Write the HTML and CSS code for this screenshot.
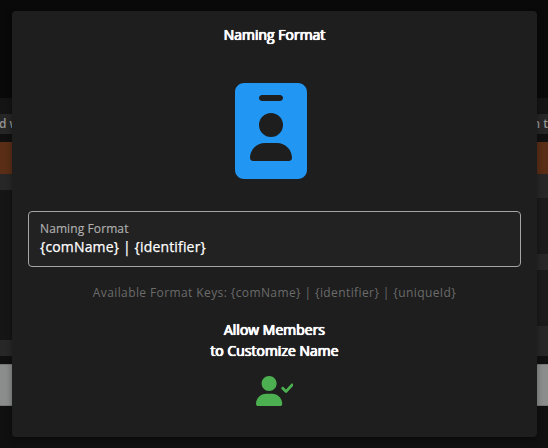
FILE: index.html
```html
<!DOCTYPE html>
<html lang="en">
<head>
<meta charset="utf-8">
<title>Naming Format</title>
<link rel="stylesheet" href="styles.css">
</head>
<body>
<div class="page" aria-hidden="true">
  <div class="side">
    <div class="top"></div><div class="gap"></div>
    <div class="label">d w</div>
    <div class="line"></div><div class="alert"></div>
    <div class="strip"></div><div class="body"></div><div class="strip"></div>
    <div class="line"></div><div class="button"></div>
  </div>
  <div class="side right">
    <div class="top"></div><div class="gap"></div>
    <div class="label">n t</div>
    <div class="line"></div><div class="alert"></div>
    <div class="strip tall"></div><div class="row"></div><div class="strip"></div><div class="row"></div><div class="strip last"></div>
    <div class="line"></div><div class="button"></div>
  </div>
</div>
<main class="dialog">
  <h1 class="title">Naming Format</h1>
  <svg class="badge" viewBox="0 0 384 512"><path fill-rule="evenodd" d="M48 0H336C362.500 0 384 21.500 384 48V464C384 490.500 362.500 512 336 512H48C21.500 512 0 490.500 0 464V48C0 21.500 21.500 0 48 0zM160 320C115.800 320 80 355.800 80 400C80 408.800 87.200 416 96 416H288C296.800 416 304 408.800 304 400C304 355.800 268.200 320 224 320zM128 224a64 64 0 1 0 128 0a64 64 0 1 0 -128 0zM144 64C135.200 64 128 71.200 128 80S135.200 96 144 96H240C248.800 96 256 88.800 256 80S248.800 64 240 64z"/></svg>
  <div class="field">
    <div class="field-label">Naming Format</div>
    <div class="field-value">{comName} | {identifier}</div>
  </div>
  <p class="hint">Available Format Keys: {comName} | {identifier} | {uniqueId}</p>
  <h2 class="title members">Allow Members<br>to Customize Name</h2>
  <svg class="check" viewBox="0 0 640 512"><path d="M274.700 304H173.300C77.610 304 0 381.600 0 477.300C0 496.500 15.520 512 34.660 512h378.700C432.500 512 448 496.500 448 477.300C448 381.600 370.400 304 274.700 304zM224 256c70.700 0 128-57.310 128-128S294.700 0 224 0S96 57.310 96 128S153.300 256 224 256zM632.300 134.400c-9.703-9-24.910-8.453-33.920 1.266l-87.050 93.750l-38.390-38.390c-9.375-9.375-24.560-9.375-33.940 0s-9.375 24.560 0 33.940l56 56C499.500 285.500 505.600 288 512 288h.4375c6.531-.125 12.720-2.891 17.160-7.672l104-112C642.600 158.600 642 143.400 632.300 134.400z"/></svg>
</main>
</body>
</html>
```
FILE: styles.css
```css
* { box-sizing: border-box; }
body {
  margin: 0;
  height: 448px;
  overflow: hidden;
  padding: 11px 11px 11px 12px;
  background: linear-gradient(#090909 98px, #101010 98px);
  font-family: "Open Sans", sans-serif;
  color: #fff;
}
.page {
  position: absolute;
  inset: 0;
  display: flex;
  justify-content: space-between;
}
.side { width: 20px; }
.top { height: 98px; }
.gap { height: 16px; background: #141414; }
.label {
  height: 20px;
  background: #262626;
  color: #929292;
  font-size: 12px;
  font-weight: 600;
  line-height: 20px;
  white-space: nowrap;
}
.side .label { text-indent: -1px; }
.right .label { display: flex; justify-content: flex-end; }
.line { height: 8px; background: #101010; }
.alert { height: 32px; background: #5a2e16; }
.strip { height: 16px; background: #272727; }
.body { height: 150px; background: #151515; }
.tall { height: 24px; }
.row { height: 56px; background: #1b1b1b; }
.last { height: 30px; }
.button { height: 42px; background: #8b8d8c; border: solid #777; border-width: 1px 0; }
.dialog {
  position: relative;
  height: 426px;
  padding: 13px 16px 0;
  display: flex;
  flex-direction: column;
  align-items: center;
  background: #1e1e1e;
  border-radius: 4px;
  box-shadow: 0 3px 6px rgba(0, 0, 0, .35);
}
.title {
  margin: 0;
  font-size: 14px;
  font-weight: 400;
  line-height: 21px;
  text-align: center;
  text-shadow: 0 0 1px #fff, -.5px 0 0 #fff, .3px 0 0 #fff;
}
.badge { width: 72px; height: 96px; margin: 38px 8px 0 0; fill: #2196f3; }
.field {
  align-self: stretch;
  height: 56px;
  margin-top: 32px;
  padding: 8px 11px;
  border: 1px solid #a5a5a5;
  border-radius: 4px;
  background: #222;
}
.field-label { font-size: 12px; line-height: 18px; letter-spacing: .1px; color: #b0b0b0; -webkit-text-stroke: .15px #b0b0b0; }
.field-value { font-size: 14px; font-weight: 500; line-height: 18px; letter-spacing: .16px; -webkit-text-stroke: .25px #fff; }
.hint {
  margin: 17px 0 0;
  font-size: 12px;
  line-height: 18px;
  letter-spacing: .4px;
  color: #6b6b6b;
  white-space: nowrap;
}
.members { margin-top: 17px; line-height: 21px; }
.check { width: 37.5px; height: 30px; margin-top: 15px; fill: #4caf50; }
```
